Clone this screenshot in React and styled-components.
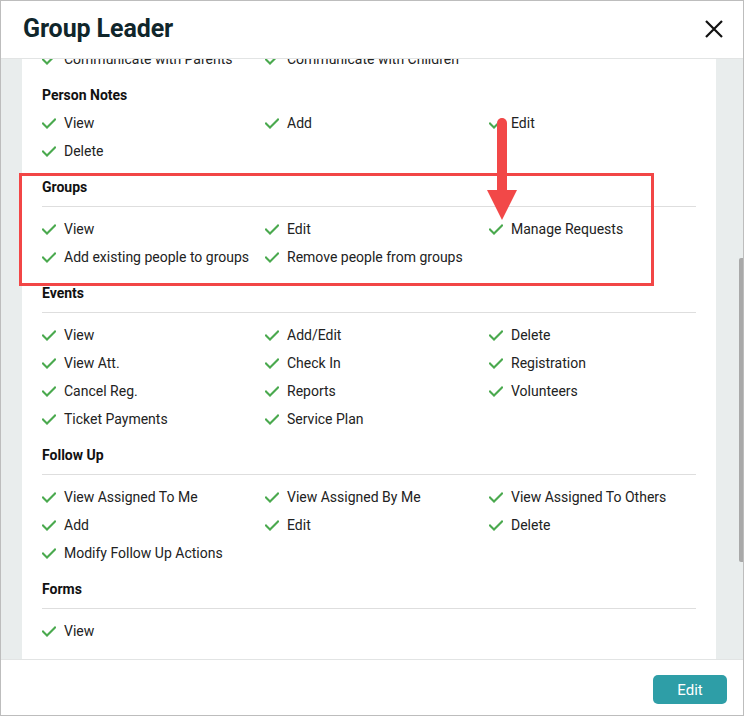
import React, { useLayoutEffect, useRef } from "react";
import styled, { createGlobalStyle } from "styled-components";

const GlobalStyle = createGlobalStyle`
  html, body {
    margin: 0;
    padding: 0;
    background: #ffffff;
    font-family: Roboto, "Noto Sans", Arial, sans-serif;
  }
  * { box-sizing: border-box; }
`;

// modal frame
const Modal = styled.div`
  position: relative;
  width: 744px;
  height: 716px;
  border: 1px solid #bdbdbd;
  background: #ffffff;
  display: flex;
  flex-direction: column;
  overflow: hidden;
`;

const Header = styled.div`
  height: 58px;
  flex: none;
  border-bottom: 1px solid #e2e4e4;
  display: flex;
  align-items: center;
  justify-content: space-between;
  padding: 0 20px 2px 22px;
`;

const Title = styled.h2`
  margin: 0;
  font-size: 25px;
  font-weight: 700;
  color: #10262b;
  letter-spacing: -0.1px;
`;

const CloseBtn = styled.button`
  border: 0;
  background: none;
  padding: 0;
  width: 18px;
  height: 18px;
  display: flex;
  cursor: pointer;
`;

const Body = styled.div`
  flex: 1;
  overflow-y: scroll;
  background: #e9eded;
  padding: 22px 22px 22px 21px;
  scrollbar-width: none;

  &::-webkit-scrollbar {
    display: none;
  }
`;

// thin scroll thumb drawn over the gray gutter
const ScrollThumb = styled.div`
  position: absolute;
  left: 738px;
  top: 257px;
  width: 4px;
  height: 304px;
  border-radius: 2px 0 0 2px;
  background: #a9a9a9;
  pointer-events: none;
`;

const Panel = styled.div`
  width: 694px;
  background: #ffffff;
  padding: 20px 20px 20px;
`;

const Section = styled.div`
  margin-bottom: 12px;
`;

const Heading = styled.div`
  font-size: 14px;
  font-weight: 700;
  line-height: 20px;
  color: #111;
  margin-bottom: ${(p) => (p.$plain ? "4px" : "0")};
`;

const Divider = styled.div`
  margin: 9px 0 8px;
  border-top: 1px solid #dedede;
`;

const Grid = styled.div`
  display: grid;
  grid-template-columns: 223px 224px 1fr;
`;

const Item = styled.div`
  display: flex;
  align-items: center;
  gap: 8px;
  height: 28px;
  font-size: 14px;
  color: #222;
  white-space: nowrap;
`;

const Footer = styled.div`
  height: 56px;
  flex: none;
  border-top: 1px solid #e2e4e4;
  display: flex;
  justify-content: flex-end;
  align-items: flex-start;
  padding: 15px 16px 0;
`;

const EditBtn = styled.button`
  width: 74px;
  height: 29px;
  border: 0;
  border-radius: 5px;
  background: #2e9ea7;
  color: #ffffff;
  font-family: Roboto, Arial, sans-serif;
  font-size: 15px;
  cursor: pointer;
`;

// annotation overlays
const Highlight = styled.div`
  position: absolute;
  left: 18px;
  top: 172px;
  width: 635px;
  height: 113px;
  border: 3px solid #f24646;
  pointer-events: none;
`;

const Arrow = styled.svg`
  position: absolute;
  left: 484px;
  top: 111px;
  pointer-events: none;
`;

const Check = () => (
  <svg width="14" height="11" viewBox="0 0 14 11">
    <polyline
      points="1,5.5 5,9.5 13,1.5"
      fill="none"
      stroke="#4aa94e"
      strokeWidth="2"
      strokeLinecap="square"
    />
  </svg>
);

const sections = [
  {
    title: "People",
    items: ["View", "Add", "Edit", "Delete", "Edit Self", "Merge", "View Notes", "Export", "Import"],
  },
  {
    title: "Communication",
    items: [
      "View Messages", "Send Email", "Send Text",
      "Templates", "Message Log", "Opt Outs",
      "Communicate with Staff", "Communicate with Leaders", "Print Labels",
      "Communicate with Parents", "Communicate with Children",
    ],
    anchor: 9,
  },
  { title: "Person Notes", plain: true, items: ["View", "Add", "Edit", "Delete"] },
  {
    title: "Groups",
    items: ["View", "Edit", "Manage Requests", "Add existing people to groups", "Remove people from groups"],
  },
  {
    title: "Events",
    items: [
      "View", "Add/Edit", "Delete",
      "View Att.", "Check In", "Registration",
      "Cancel Reg.", "Reports", "Volunteers",
      "Ticket Payments", "Service Plan",
    ],
  },
  {
    title: "Follow Up",
    items: [
      "View Assigned To Me", "View Assigned By Me", "View Assigned To Others",
      "Add", "Edit", "Delete",
      "Modify Follow Up Actions",
    ],
  },
  { title: "Forms", items: ["View"] },
  { title: "Reports", items: ["View", "Run", "Export", "Schedule"] },
  { title: "Settings", items: ["View"] },
];

const App = () => {
  const bodyRef = useRef(null);
  const anchorRef = useRef(null);

  // scroll so the "Communicate with Parents" row sits half under the header
  useLayoutEffect(() => {
    const body = bodyRef.current;
    const anchor = anchorRef.current;
    if (!body || !anchor) return;
    const rel = anchor.getBoundingClientRect().top - body.getBoundingClientRect().top;
    body.scrollTop = body.scrollTop + rel + 14;
  }, []);

  return (
    <>
      <GlobalStyle />
      <Modal>
        <Header>
          <Title>Group Leader</Title>
          <CloseBtn aria-label="Close">
            <svg width="18" height="18" viewBox="0 0 18 18">
              <path d="M1 1 L17 17 M17 1 L1 17" stroke="#111" strokeWidth="2.2" />
            </svg>
          </CloseBtn>
        </Header>

        <Body ref={bodyRef}>
          <Panel>
            {sections.map((s) => (
              <Section key={s.title}>
                <Heading $plain={s.plain}>{s.title}</Heading>
                {!s.plain && <Divider />}
                <Grid>
                  {s.items.map((label, i) => (
                    <Item key={label + i} ref={s.anchor === i ? anchorRef : null}>
                      <Check />
                      {label}
                    </Item>
                  ))}
                </Grid>
              </Section>
            ))}
          </Panel>
        </Body>

        <Footer>
          <EditBtn>Edit</EditBtn>
        </Footer>

        <ScrollThumb />
        <Highlight />
        <Arrow width="34" height="108" viewBox="0 0 34 108">
          <line x1="17" y1="11" x2="17" y2="82" stroke="#f24848" strokeWidth="10" strokeLinecap="round" />
          <polygon points="2,78 32,78 17,108" fill="#f24848" />
        </Arrow>
      </Modal>
    </>
  );
};

export default App;
